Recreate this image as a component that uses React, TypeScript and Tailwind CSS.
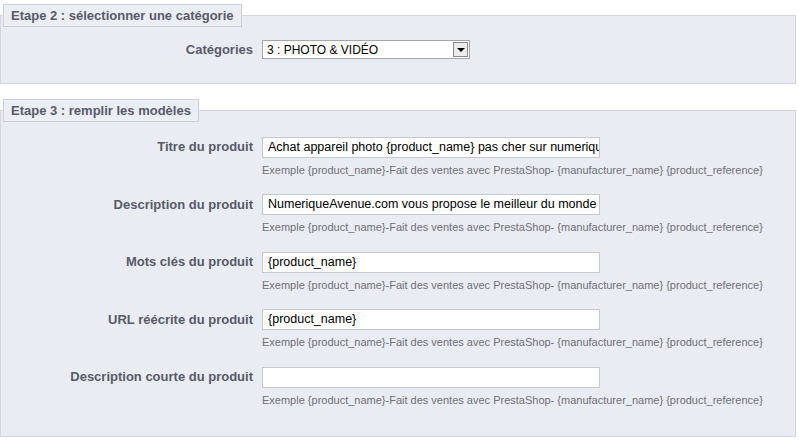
const hint =
	"Exemple {product_name}-Fait des ventes avec PrestaShop- {manufacturer_name} {product_reference}";

const rows = [
	{ label: "Titre du produit", value: "Achat appareil photo {product_name} pas cher sur numeriqu" },
	{ label: "Description du produit", value: "NumeriqueAvenue.com vous propose le meilleur du monde" },
	{ label: "Mots clés du produit", value: "{product_name}" },
	{ label: "URL réécrite du produit", value: "{product_name}" },
	{ label: "Description courte du produit", value: "" },
];

function Legend({ children }: { children: React.ReactNode }) {
	return (
		<legend className="ml-0 border border-[#cdd0d6] bg-[#eceef5] px-[7px] h-[23px] leading-[21px] text-[13px] font-bold text-[#585a69]">
			{children}
		</legend>
	);
}

export default function App() {
	return (
		<div className="min-h-screen bg-white font-['Liberation_Sans',Arial,sans-serif] pt-[4px]">
			<fieldset className="w-[796px] border border-[#d3d5db] bg-[#eaecf3] pl-[2px] pr-0 pb-[23px]">
				<Legend>Etape 2 : sélectionner une catégorie</Legend>
				<div className="flex items-center pt-[13px] gap-[9px]">
					<div className="w-[250px] text-right text-[13px] font-bold text-[#585a69]">
						Catégories
					</div>
					<div className="flex items-center w-[208px] h-[19px] bg-white border border-[#a6a6a6] pl-[4px] pr-[1px]">
						<span className="flex-1 text-[12px] text-black leading-none">
							3 : PHOTO &amp; VIDÉO
						</span>
						<span className="flex items-center justify-center w-[15px] h-[15px] border border-[#8a8a8a] bg-[#ececec]">
							<span className="w-0 h-0 border-l-[4px] border-r-[4px] border-t-[4px] border-l-transparent border-r-transparent border-t-black" />
						</span>
					</div>
				</div>
			</fieldset>

			<fieldset className="mt-[15px] w-[796px] border border-[#d3d5db] bg-[#eaecf3] pl-[2px] pr-0 pb-[29px]">
				<Legend>Etape 3 : remplir les modèles</Legend>
				<div className="flex flex-col pt-[15px] gap-[17.5px]">
					{rows.map((r) => (
						<div key={r.label} className="flex gap-[9px]">
							<div className="w-[250px] h-[21px] flex items-center justify-end text-[13px] font-bold text-[#585a69]">
								{r.label}
							</div>
							<div className="flex flex-col">
								<div className="w-[338px] h-[21px] bg-white border border-[#c6c8cc] px-[5px] flex items-center overflow-hidden whitespace-nowrap text-[12.5px] text-black">
									{r.value}
								</div>
								<div className="mt-[6px] leading-[13px] text-[11px] text-[#6f7076] whitespace-nowrap">
									{hint}
								</div>
							</div>
						</div>
					))}
				</div>
			</fieldset>
		</div>
	);
}
